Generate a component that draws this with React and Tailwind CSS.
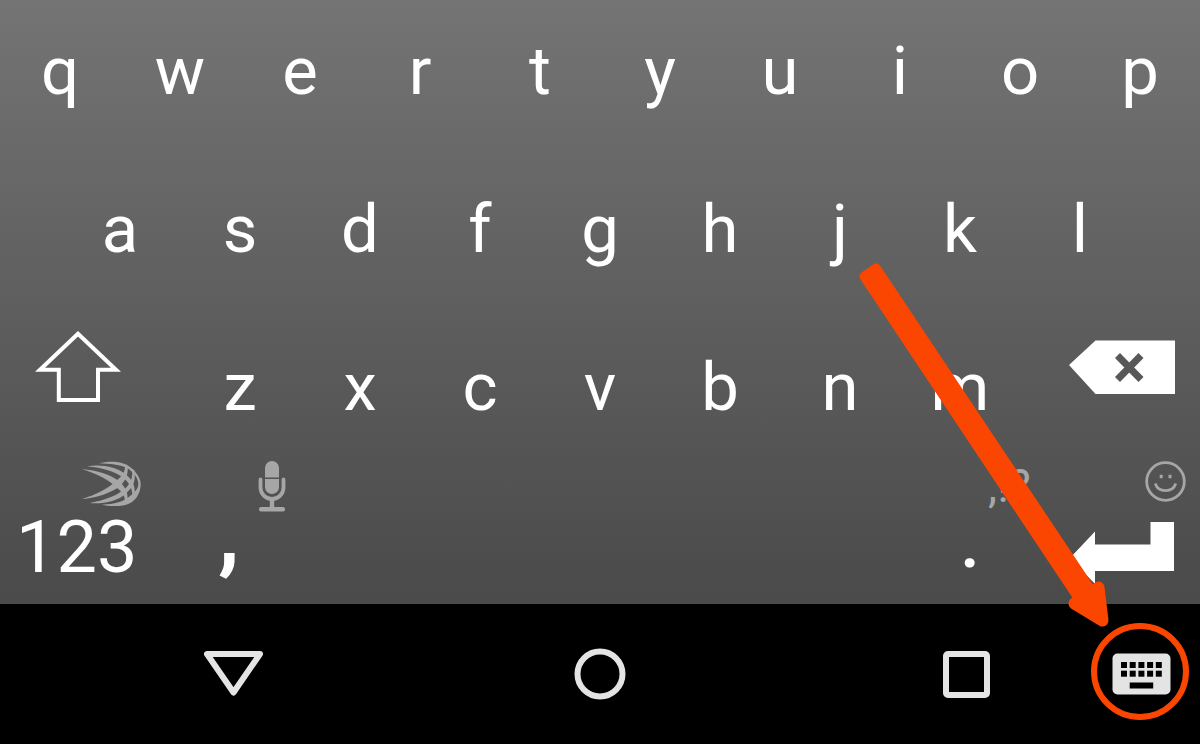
const keyBase =
  "flex items-center justify-center font-normal text-[67px] leading-none text-white";

function LetterKey({ children, className = "" }) {
  return (
    <button type="button" className={`${keyBase} ${className}`}>
      {children}
    </button>
  );
}

function ShiftIcon() {
  return (
    <svg viewBox="0 0 86 72" className="h-[72px] w-[86px]" fill="none" stroke="#fff" strokeWidth="4" aria-hidden="true">
      <path d="M43 2.800 L5 38.800 H23.800 V69 H63 V38.800 H81 Z" />
    </svg>
  );
}

function BackspaceIcon() {
  return (
    <svg viewBox="0 0 106 54" className="h-[54px] w-[106px]" aria-hidden="true">
      <path d="M0 25 L26.500 0.500 H106 V54 H26.500 Z" fill="#fff" />
      <path d="M48.500 15.500 L72 39.500 M72 15.500 L48.500 39.500" stroke="#585858" strokeWidth="7" />
    </svg>
  );
}

function EnterIcon() {
  return (
    <svg viewBox="0 0 104 62" className="h-[62px] w-[104px]" fill="#fff" aria-hidden="true">
      <path d="M80.500 0 H104 V49 H25 V62 L0 36 L25 9.500 V22.500 H80.500 Z" />
    </svg>
  );
}

function FlowIcon() {
  return (
    <svg viewBox="64 32 180 138" className="h-[46px] w-[60px]" fill="#a6a6a6" aria-hidden="true">
      <path d="M118 39 C150 31 192 32 215 53 C236 72 243 88 243 101 C243 126 232 146 212 158 C190 170 150 169 126 163 C165 162 192 154 210 138 C226 126 236 114 236 101 C236 84 224 68 206 55 C182 42 150 41 118 39 Z" />
      <path d="M82 48 C125 41 172 50 198 72 C222 92 229 112 224 142 L217 147 C221 122 213 100 191 83 C165 63 130 53 82 48 Z" />
      <path d="M90 158 C130 162 174 152 198 130 C222 110 229 90 224 60 L217 55 C221 80 213 102 191 119 C165 139 135 149 90 158 Z" />
      <path d="M66 56 C112 60 156 74 180 94 C198 110 206 130 204 154 L196 158 C197 139 190 127 175 115 C146 86 110 70 66 56 Z" />
      <path d="M66 147 C112 142 156 128 180 108 C198 92 206 72 204 48 L196 44 C197 63 190 75 175 87 C146 116 110 132 66 147 Z" />
    </svg>
  );
}

function MicIcon() {
  return (
    <svg viewBox="0 0 28 52" className="h-[52px] w-7" fill="#a6a6a6" aria-hidden="true">
      <path d="M7 16.500 V7 A7 7 0 0 1 21 7 V16.500 Z" />
      <path d="M7 18 H21 V26 A7 7 0 0 1 7 26 Z" />
      <path d="M2.500 18.500 V26.500 A11.500 11.500 0 0 0 25.500 26.500 V18.500" fill="none" stroke="#a6a6a6" strokeWidth="3.800" strokeLinecap="round" />
      <path d="M11.800 38 H16.200 V48 H11.800 Z" />
      <rect x="1" y="46" width="26" height="4.500" rx="2" />
    </svg>
  );
}

function SmileIcon() {
  return (
    <svg viewBox="0 0 42 42" className="h-[42px] w-[42px]" fill="none" stroke="#a6a6a6" aria-hidden="true">
      <circle cx="21.500" cy="20.500" r="18.800" strokeWidth="2.800" />
      <path d="M11.200 22.500 C14.500 32 28.500 32 31.800 22.500" strokeWidth="2.800" />
      <path d="M15.700 13.800 H18.700 V17.300 H15.700 Z M24.500 13.800 H27.500 V17.300 H24.500 Z" fill="#a6a6a6" stroke="none" />
    </svg>
  );
}

function KeyboardIcon() {
  return (
    <svg viewBox="0 0 59 42" className="h-[42px] w-[59px]" aria-hidden="true">
      <rect x="0.500" y="0.500" width="58" height="41" rx="5" fill="#e4e4e4" />
      <g fill="#000">
        {[9, 17.7, 26.4, 35.1, 43.8].map((x) => (
          <g key={x}>
            <rect x={x} y="9" width="6" height="6" />
            <rect x={x} y="17.700" width="6" height="6" />
          </g>
        ))}
        <rect x="17.700" y="29.500" width="23.500" height="6" />
      </g>
    </svg>
  );
}

function Pointer() {
  return (
    <svg
      viewBox="0 0 1200 744"
      preserveAspectRatio="none"
      className="pointer-events-none absolute inset-0 h-full w-full"
      fill="#fa4600"
      stroke="#fa4600"
      strokeLinejoin="round"
      aria-hidden="true"
    >
      <path d="M876 268.500 L1090 589 L1078 597 L864.500 276.500 Z" strokeWidth="10" />
      <path d="M1074.500 603.500 L1098.500 587.500 L1102.500 620.500 Z" strokeWidth="12" />
      <ellipse cx="1140" cy="671.500" rx="46" ry="45.500" fill="none" strokeWidth="6" />
    </svg>
  );
}

export default function App() {
  return (
    <main className="relative w-full font-['Roboto',sans-serif]">
      <section aria-label="Keyboard" className="bg-linear-to-b from-[#747474] to-[#4a4a4a]">
        <div className="grid h-[150px] grid-cols-10 pb-2">
          {[..."qwertyuiop"].map((c) => (
            <LetterKey key={c}>{c}</LetterKey>
          ))}
        </div>
        <div className="grid h-[158px] grid-cols-9 px-[5%]">
          {[..."asdfghjkl"].map((c) => (
            <LetterKey key={c}>{c}</LetterKey>
          ))}
        </div>
        <div className="grid h-[150px] grid-cols-20 pt-2">
          <button type="button" aria-label="Shift" className="col-span-3 flex items-start justify-center pt-[15px] pr-6">
            <ShiftIcon />
          </button>
          {[..."zxcvbnm"].map((c) => (
            <LetterKey key={c} className="col-span-2">{c}</LetterKey>
          ))}
          <button type="button" aria-label="Backspace" className="col-span-3 flex items-start justify-end pt-6 pr-[25px]">
            <BackspaceIcon />
          </button>
        </div>
        <div className="grid h-[146px] grid-cols-20 pt-[3px] text-[72px] leading-[56px] text-white">
          <button type="button" aria-label="123" className="col-span-3 flex flex-col items-start pl-4">
            <span className="flex h-[59px] pl-[65px]">
              <FlowIcon />
            </span>
            <span>123</span>
          </button>
          <button type="button" aria-label="Comma" className="col-span-2 flex flex-col items-start pl-[38px]">
            <span className="flex h-11 pl-10">
              <MicIcon />
            </span>
            <span className="text-[88px] font-bold leading-[56px]">,</span>
          </button>
          <button type="button" aria-label="Space" className="col-span-11" />
          <button type="button" aria-label="Punctuation" className="col-span-1 flex flex-col items-start">
            <span className="flex h-[54px] pl-7 text-[46px] leading-[50px] whitespace-nowrap text-[#a6a6a6]">,!?</span>
            <span className="font-medium">.</span>
          </button>
          <button type="button" aria-label="Enter" className="col-span-3 flex flex-col items-end">
            <span className="flex h-[61px] pr-[14px]">
              <SmileIcon />
            </span>
            <span className="pr-[26px]">
              <EnterIcon />
            </span>
          </button>
        </div>
      </section>
      <nav aria-label="System" className="grid h-[140px] grid-cols-[417fr_366fr_300fr_117fr] bg-black">
        <button type="button" aria-label="Back" className="flex items-center justify-center pl-[51px]">
          <svg viewBox="0 0 60 48" className="h-12 w-[60px]" fill="none" stroke="#e4e4e4" strokeWidth="6" strokeLinejoin="round" aria-hidden="true">
            <path d="M3 4 H56 L29.500 42.500 Z" />
          </svg>
        </button>
        <button type="button" aria-label="Home" className="flex items-center justify-center">
          <svg viewBox="0 0 52 52" className="h-[52px] w-[52px]" fill="none" stroke="#e4e4e4" strokeWidth="6" aria-hidden="true">
            <circle cx="26" cy="26" r="22.500" />
          </svg>
        </button>
        <button type="button" aria-label="Recent apps" className="flex items-center justify-center pl-[66px]">
          <svg viewBox="0 0 48 48" className="h-12 w-12" fill="none" stroke="#e4e4e4" strokeWidth="6" aria-hidden="true">
            <rect x="4" y="4" width="41" height="41" rx="2" />
          </svg>
        </button>
        <button type="button" aria-label="Switch keyboard" className="flex items-center justify-center">
          <KeyboardIcon />
        </button>
      </nav>
      <Pointer />
    </main>
  );
}
